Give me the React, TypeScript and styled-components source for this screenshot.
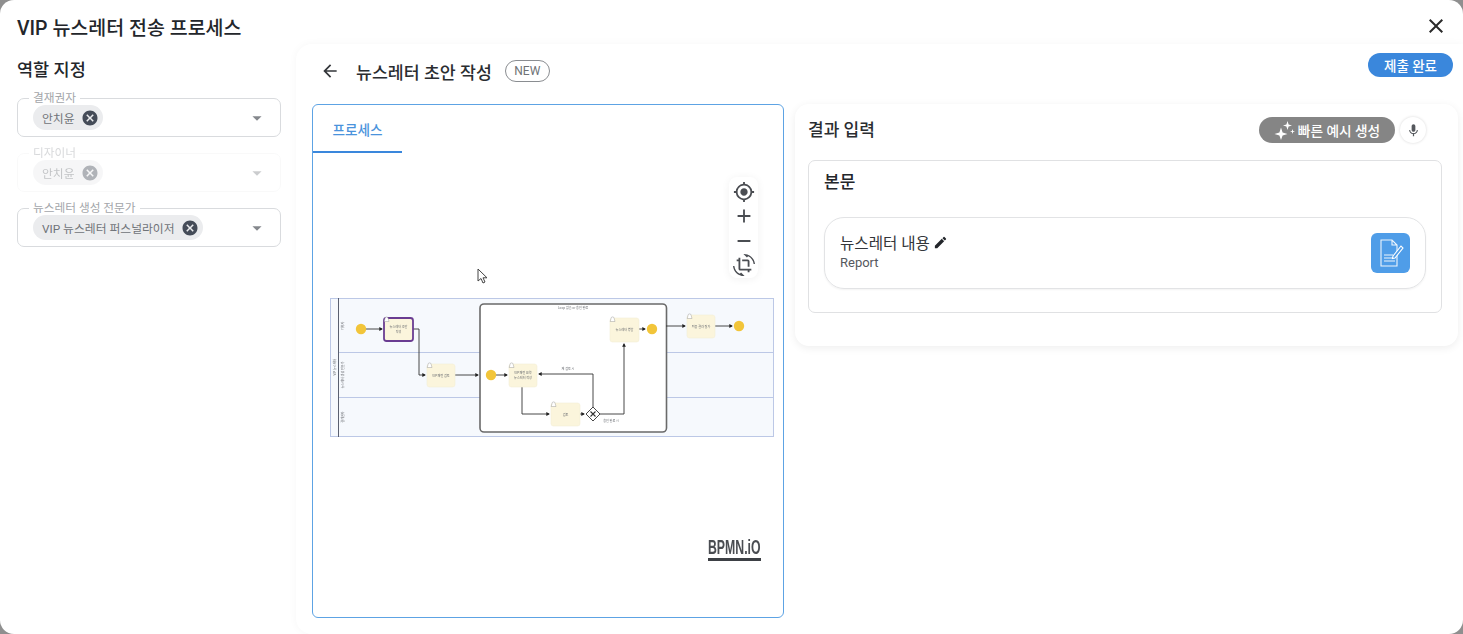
import { createGlobalStyle, styled } from "styled-components";
import {
    MdAdd,
    MdArrowBack,
    MdArrowDropDown,
    MdCancel,
    MdClose,
    MdCropRotate,
    MdEdit,
    MdGpsFixed,
    MdMic,
    MdRemove,
} from "react-icons/md";

const GlobalStyle = createGlobalStyle`
    * {
        box-sizing: border-box;
    }
    html, body {
        margin: 0;
        height: 100%;
        overflow: hidden;
        background: #8f8f8f;
        font-family: Roboto, "Noto Sans CJK KR", sans-serif;
        color: #1f2329;
    }
`;

const Dialog = styled.div`
    position: relative;
    width: 1463px;
    height: 634px;
    display: flex;
    flex-direction: column;
    background: #fff;
    border-radius: 14px;
    overflow: hidden;
`;

const Header = styled.header`
    height: 44px;
    flex-shrink: 0;
    display: flex;
    align-items: center;
    justify-content: space-between;
    padding: 12px 15px 4px 17px;
`;

const Title = styled.h1`
    margin: 0;
    font-size: 19.5px;
    font-weight: 500;
    color: #23262b;
`;

const CloseButton = styled.button`
    width: 24px;
    height: 24px;
    padding: 0;
    border: none;
    background: none;
    display: flex;
    color: #2a2a2a;
    font-size: 24px;
`;

const Body = styled.div`
    flex: 1;
    display: flex;
    min-height: 0;
`;

const Sidebar = styled.aside`
    width: 296px;
    flex-shrink: 0;
    padding: 14px 15px 0 17px;
`;

const SectionTitle = styled.h2`
    margin: 0 0 16px;
    height: 24px;
    line-height: 24px;
    font-size: 17.5px;
    font-weight: 500;
    color: #23262b;
`;

const FieldList = styled.div`
    display: flex;
    flex-direction: column;
    gap: 16px;
`;

const Field = styled.div<{ $disabled?: boolean }>`
    position: relative;
    height: 39px;
    display: flex;
    align-items: center;
    justify-content: space-between;
    padding: 0 12px 0 15px;
    border: 1px solid ${({ $disabled }) => ($disabled ? "#f1f2f3" : "#d9dbde")};
    border-radius: 7px;
    opacity: ${({ $disabled }) => ($disabled ? 0.42 : 1)};
`;

const FieldLabel = styled.span`
    position: absolute;
    left: 11px;
    top: -8px;
    padding: 0 4px;
    background: #fff;
    font-size: 11.7px;
    line-height: 14px;
    color: #a3a6aa;
`;

const Chip = styled.span`
    height: 25px;
    display: inline-flex;
    align-items: center;
    gap: 6px;
    padding: 0 4px 0 9px;
    border-radius: 13px;
    background: #ebecee;
    font-size: 11.8px;
    color: #6f7378;
`;

const ChipRemove = styled.span`
    display: flex;
    font-size: 18px;
    color: #454c58;
`;

const Caret = styled.span`
    display: flex;
    font-size: 22px;
    color: #85888d;
`;

const Main = styled.main`
    flex: 1;
    min-width: 0;
    display: flex;
    flex-direction: column;
    padding: 0 5px 16px 16px;
    border-radius: 16px 0 0 16px;
    box-shadow: 0 0 8px rgba(0, 0, 0, 0.04);
`;

const MainHeader = styled.div`
    height: 60px;
    flex-shrink: 0;
    display: flex;
    align-items: center;
    padding: 0 0 6px 8px;
`;

const BackButton = styled.span`
    display: flex;
    font-size: 20px;
    margin-right: 16px;
    color: #33363a;
`;

const StepTitle = styled.h3`
    margin: 0 13px 0 0;
    font-size: 17.3px;
    font-weight: 500;
    color: #2a2d31;
`;

const NewBadge = styled.span`
    height: 22px;
    width: 45px;
    display: flex;
    align-items: center;
    justify-content: center;
    border: 1px solid #8a8d91;
    border-radius: 11px;
    font-size: 12px;
    color: #6f7276;
`;

const SubmitButton = styled.button`
    margin: -12px 5px 0 auto;
    width: 85px;
    height: 24px;
    padding: 0;
    border: none;
    border-radius: 12px;
    background: #3a87dc;
    color: #fff;
    font: 500 13.5px Roboto, "Noto Sans CJK KR", sans-serif;
`;

const Columns = styled.div`
    flex: 1;
    display: flex;
    gap: 11px;
    min-height: 0;
`;

const ProcessPanel = styled.section`
    position: relative;
    width: 472px;
    flex-shrink: 0;
    border: 1px solid #5da3e4;
    border-radius: 6px;
    overflow: hidden;
`;

const Tabs = styled.div`
    height: 48px;
    display: flex;
`;

const Tab = styled.div`
    width: 89px;
    display: flex;
    align-items: center;
    justify-content: center;
    padding-top: 1px;
    border-bottom: 2px solid #3a87dc;
    font-size: 13.6px;
    font-weight: 500;
    color: #4a93dc;
`;

const Canvas = styled.div`
    padding: 145px 0 0 17px;
`;

const Tools = styled.div`
    position: absolute;
    top: 72px;
    left: 416px;
    width: 29px;
    height: 101px;
    display: flex;
    flex-direction: column;
    align-items: center;
    justify-content: space-around;
    padding: 3px 0 1px;
    border-radius: 8px;
    background: #fff;
    box-shadow: 0 1px 8px rgba(0, 0, 0, 0.06);
    font-size: 22px;
    color: #4a4d52;
`;

const ToolIcon = styled.span`
    display: flex;
`;

const BpmnLogo = styled.div`
    position: absolute;
    left: 395px;
    top: 433px;
    width: 53px;
    height: 23px;
    border-bottom: 3px solid #3d4045;
    font: 700 19.5px/19px "Liberation Sans", sans-serif;
    color: #4a4d52;
    white-space: nowrap;
`;

const BpmnWord = styled.span`
    display: inline-block;
    transform: scaleX(0.63);
    transform-origin: left center;
`;

const Cursor = styled.svg`
    position: absolute;
    left: 164px;
    top: 163px;
`;

const ResultPanel = styled.section`
    width: 663px;
    height: 242px;
    flex-shrink: 0;
    padding: 13px 16px 33px 13px;
    border-radius: 14px;
    background: #fff;
    box-shadow: 0 2px 8px rgba(0, 0, 0, 0.07);
`;

const ResultHeader = styled.div`
    height: 26px;
    display: flex;
    align-items: center;
    margin-bottom: 17px;
`;

const ResultTitle = styled.h3`
    margin: -3px auto 0 0;
    font-size: 17px;
    font-weight: 500;
    color: #2a2d31;
`;

const QuickButton = styled.button`
    width: 136px;
    height: 26px;
    display: flex;
    align-items: center;
    justify-content: center;
    gap: 2px;
    padding: 0;
    border: none;
    border-radius: 13px;
    background: #858585;
    color: #fff;
    font: 500 13.7px Roboto, "Noto Sans CJK KR", sans-serif;
`;

const MicButton = styled.span`
    width: 26px;
    height: 26px;
    margin: 0 16px 0 5px;
    display: flex;
    align-items: center;
    justify-content: center;
    border-radius: 50%;
    background: #fff;
    box-shadow: 0 0 3px rgba(0, 0, 0, 0.16);
    font-size: 15px;
    color: #55585d;
`;

const BodyCard = styled.div`
    height: 153px;
    padding: 9px 15px 0;
    border: 1px solid #e0e1e3;
    border-radius: 7px;
`;

const BodyTitle = styled.h4`
    margin: 0 0 23px;
    height: 24px;
    line-height: 24px;
    font-size: 17px;
    font-weight: 500;
    color: #23262b;
`;

const OutputCard = styled.div`
    height: 72px;
    display: flex;
    align-items: center;
    justify-content: space-between;
    padding: 0 15px;
    border: 1px solid #e2e3e5;
    border-radius: 20px;
    box-shadow: 0 1px 2px rgba(0, 0, 0, 0.05);
`;

const OutputText = styled.div`
    margin-top: -3px;
`;

const OutputName = styled.div`
    display: flex;
    align-items: center;
    gap: 3px;
    height: 20px;
    font-size: 15.6px;
    color: #33363a;
`;

const PencilIcon = styled.span`
    display: flex;
    font-size: 15px;
    color: #23262b;
`;

const OutputType = styled.div`
    margin-top: 3px;
    font-size: 13px;
    line-height: 16px;
    color: #55585d;
`;

const ReportIcon = styled.div`
    width: 39px;
    height: 40px;
    display: flex;
    align-items: center;
    justify-content: center;
    border-radius: 6px;
    background: #4f9de8;
`;

const DiagramSvg = styled.svg`
    display: block;
    filter: blur(0.4px);
`;

const TaskLabel = styled.text`
    font-family: "Noto Sans CJK KR", sans-serif;
    font-size: 3.1px;
    fill: #66696e;
    text-anchor: middle;
`;

const X0 = 330;
const Y0 = 298;

const tasks = [
    { x: 384, y: 318, w: 29, h: 23, lines: ["뉴스레터 초안", "작성"], active: true },
    { x: 427, y: 364, w: 28, h: 23, lines: ["VIP 패턴 검토"] },
    { x: 509, y: 364, w: 28, h: 23, lines: ["VIP 패턴 요약", "뉴스레터 작성"] },
    { x: 551, y: 403, w: 29, h: 23, lines: ["검토"] },
    { x: 610, y: 318, w: 29, h: 24, lines: ["뉴스레터 병합"] },
    { x: 687, y: 315, w: 28, h: 23, lines: ["최종 결과 평가"] },
];

const events = [
    { cx: 361, cy: 329 },
    { cx: 491, cy: 375 },
    { cx: 652, cy: 329 },
    { cx: 739, cy: 326 },
];

const flows = [
    "M366 329H382",
    "M413 329H419V375H425",
    "M455 375H478",
    "M496 375H507",
    "M522 387V414H549",
    "M580 414H584",
    "M593 407V374H539",
    "M600 414H624V344",
    "M639 329H645",
    "M666 326H685",
    "M715 326H732",
];

const BpmnDiagram = () => (
    <DiagramSvg width="445" height="141" viewBox={`${X0} ${Y0} 445 141`}>
        <defs>
            <marker id="arrow" markerWidth="5" markerHeight="5" refX="3" refY="2.5" orient="auto">
                <path d="M0 0.4L4 2.5L0 4.6Z" fill="#222" />
            </marker>
        </defs>
        <rect x="330.5" y="298.5" width="443" height="138" fill="#f6f9fd" stroke="#bcc8e6" />
        <path d="M338.5 298V437" stroke="#5a6070" />
        <path d="M339 352.5H773M339 397.5H773" stroke="#bcc8e6" />
        <TaskLabel transform="rotate(-90 334.5 367)" x="334.5" y="368">
            VIP 뉴스레터
        </TaskLabel>
        <TaskLabel transform="rotate(-90 343 326)" x="343" y="327">
            기획자
        </TaskLabel>
        <TaskLabel transform="rotate(-90 343 375)" x="343" y="376">
            뉴스레터 생성 전문가
        </TaskLabel>
        <TaskLabel transform="rotate(-90 343 417)" x="343" y="418">
            결재권자
        </TaskLabel>
        <rect x="480" y="304" width="186.5" height="128" rx="4" fill="#fff" stroke="#6a6a6a" strokeWidth="1.6" />
        <TaskLabel x="573" y="309">
            Loop 없음 or 승인 완료
        </TaskLabel>
        <TaskLabel x="568" y="369.5">
            재 검토 시
        </TaskLabel>
        <TaskLabel x="611" y="421.5">
            승인 완료 시
        </TaskLabel>
        {flows.map((d) => (
            <path key={d} d={d} fill="none" stroke="#333" strokeWidth="0.9" markerEnd="url(#arrow)" />
        ))}
        {tasks.map((t) => (
            <g key={t.x}>
                <rect
                    x={t.x}
                    y={t.y}
                    width={t.w}
                    height={t.h}
                    rx="2.5"
                    fill="#fbf5dc"
                    stroke={t.active ? "#6a3d92" : "#f4eed6"}
                    strokeWidth={t.active ? 1.8 : 0.6}
                />
                <path
                    d={`M${t.x + 1} ${t.y + 0.5}a1.6 1.6 0 0 1 3.2 0l0.8 3h-4.8z`}
                    fill="#fff"
                    stroke="#888"
                    strokeWidth="0.4"
                />
                {t.lines.map((line, i) => (
                    <TaskLabel
                        key={line}
                        x={t.x + t.w / 2}
                        y={t.y + t.h / 2 + 1.2 + (i - (t.lines.length - 1) / 2) * 4.5}
                    >
                        {line}
                    </TaskLabel>
                ))}
            </g>
        ))}
        {events.map((e) => (
            <circle key={e.cx} cx={e.cx} cy={e.cy} r="5.2" fill="#f2c53a" />
        ))}
        <path d="M593 407L600 414L593 421L586 414Z" fill="#fff" stroke="#333" strokeWidth="0.9" />
        <path d="M590.5 411.5L595.5 416.5M595.5 411.5L590.5 416.5" stroke="#333" strokeWidth="1.1" />
    </DiagramSvg>
);

const SparkStars = () => (
    <svg width="22" height="20" viewBox="0 0 22 20" fill="#fff">
        <path d="M7 7.5L8.6 12.4L13.5 14L8.6 15.6L7 20L5.4 15.6L0.5 14L5.4 12.4Z" />
        <path d="M13.5 1L14.6 4.4L18 5.5L14.6 6.6L13.5 10L12.4 6.6L9 5.5L12.4 4.4Z" />
        <path d="M18.5 9L19.1 10.9L21 11.5L19.1 12.1L18.5 14L17.9 12.1L16 11.5L17.9 10.9Z" />
    </svg>
);

const roles = [
    { label: "결재권자", chip: "안치윤" },
    { label: "디자이너", chip: "안치윤", disabled: true },
    { label: "뉴스레터 생성 전문가", chip: "VIP 뉴스레터 퍼스널라이저" },
];

const App = () => {
    return (
        <Dialog>
            <GlobalStyle />
            <Header>
                <Title>VIP 뉴스레터 전송 프로세스</Title>
                <CloseButton>
                    <MdClose />
                </CloseButton>
            </Header>
            <Body>
                <Sidebar>
                    <SectionTitle>역할 지정</SectionTitle>
                    <FieldList>
                        {roles.map((role) => (
                            <Field key={role.label} $disabled={role.disabled}>
                                <FieldLabel>{role.label}</FieldLabel>
                                <Chip>
                                    {role.chip}
                                    <ChipRemove>
                                        <MdCancel />
                                    </ChipRemove>
                                </Chip>
                                <Caret>
                                    <MdArrowDropDown />
                                </Caret>
                            </Field>
                        ))}
                    </FieldList>
                </Sidebar>
                <Main>
                    <MainHeader>
                        <BackButton>
                            <MdArrowBack />
                        </BackButton>
                        <StepTitle>뉴스레터 초안 작성</StepTitle>
                        <NewBadge>NEW</NewBadge>
                        <SubmitButton>제출 완료</SubmitButton>
                    </MainHeader>
                    <Columns>
                        <ProcessPanel>
                            <Tabs>
                                <Tab>프로세스</Tab>
                            </Tabs>
                            <Canvas>
                                <BpmnDiagram />
                            </Canvas>
                            <Tools>
                                <ToolIcon>
                                    <MdGpsFixed />
                                </ToolIcon>
                                <ToolIcon>
                                    <MdAdd />
                                </ToolIcon>
                                <ToolIcon>
                                    <MdRemove />
                                </ToolIcon>
                                <ToolIcon>
                                    <MdCropRotate />
                                </ToolIcon>
                            </Tools>
                            <BpmnLogo>
                                <BpmnWord>BPMN.iO</BpmnWord>
                            </BpmnLogo>
                            <Cursor width="12" height="17" viewBox="0 0 12 17">
                                <path
                                    d="M1 1V13L4 10.5L6 15L8 14L6 9.8H10Z"
                                    fill="#fff"
                                    stroke="#444"
                                    strokeWidth="1"
                                />
                            </Cursor>
                        </ProcessPanel>
                        <ResultPanel>
                            <ResultHeader>
                                <ResultTitle>결과 입력</ResultTitle>
                                <QuickButton>
                                    <SparkStars />
                                    빠른 예시 생성
                                </QuickButton>
                                <MicButton>
                                    <MdMic />
                                </MicButton>
                            </ResultHeader>
                            <BodyCard>
                                <BodyTitle>본문</BodyTitle>
                                <OutputCard>
                                    <OutputText>
                                        <OutputName>
                                            뉴스레터 내용
                                            <PencilIcon>
                                                <MdEdit />
                                            </PencilIcon>
                                        </OutputName>
                                        <OutputType>Report</OutputType>
                                    </OutputText>
                                    <ReportIcon>
                                        <svg width="28" height="30" viewBox="0 0 28 30" fill="none">
                                            <path
                                                d="M4 2H15L20 7V28H4Z M15 2V7H20"
                                                stroke="#fff"
                                                strokeWidth="1.1"
                                                opacity="0.9"
                                            />
                                            <path
                                                d="M7 17H16M7 20H16M7 23H18"
                                                stroke="#fff"
                                                strokeWidth="1.2"
                                                opacity="0.9"
                                            />
                                            <path
                                                d="M16 18L24 8L26 10L18 20L15.5 20.5Z"
                                                fill="#4f9de8"
                                                stroke="#fff"
                                                strokeWidth="1.1"
                                            />
                                        </svg>
                                    </ReportIcon>
                                </OutputCard>
                            </BodyCard>
                        </ResultPanel>
                    </Columns>
                </Main>
            </Body>
        </Dialog>
    );
};

export default App;
